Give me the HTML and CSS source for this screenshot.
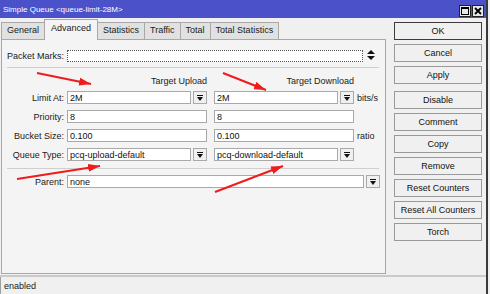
FILE: index.html
```html
<!DOCTYPE html>
<html lang="en">
<head>
    <meta charset="UTF-8">
    <title>Simple Queue &lt;queue-limit-28M&gt;</title>
    <link rel="stylesheet" href="styles.css">
</head>
<body>
    <div class="window">
        <!-- Title bar -->
        <div class="titlebar">
            <span class="title">Simple Queue &lt;queue-limit-28M&gt;</span>
            <div class="win-buttons">
                <span class="win-btn">
                    <svg width="8" height="8" viewBox="0 0 8 8"><rect x="0.5" y="0.5" width="7" height="7" fill="none" stroke="#000"/><rect x="0" y="0" width="8" height="2" fill="#000"/></svg>
                </span>
                <span class="win-btn">
                    <svg width="8" height="8" viewBox="0 0 8 8"><path d="M1 1 L7 7 M7 1 L1 7" stroke="#000" stroke-width="1.8"/></svg>
                </span>
            </div>
        </div>

        <div class="main">
            <div class="left">
                <!-- Tabs -->
                <div class="tabs">
                    <span class="tab">General</span>
                    <span class="tab active">Advanced</span>
                    <span class="tab">Statistics</span>
                    <span class="tab">Traffic</span>
                    <span class="tab">Total</span>
                    <span class="tab">Total Statistics</span>
                </div>

                <div class="panel">
                    <div class="row">
                        <label class="label">Packet Marks:</label>
                        <input class="input marks" type="text" value="">
                        <svg class="spinner" width="8" height="11" viewBox="0 0 8 11"><path d="M4 0 L8 4 L0 4 Z M0 6 L8 6 L4 10 Z" fill="#111"/></svg>
                    </div>

                    <div class="separator"></div>

                    <div class="row heading">
                        <span class="label"></span>
                        <span class="col-head">Target Upload</span>
                        <span class="col-head">Target Download</span>
                    </div>

                    <div class="row first">
                        <label class="label">Limit At:</label>
                        <div class="field">
                            <input class="input" type="text" value="2M">
                            <span class="drop"><svg width="6" height="6" viewBox="0 0 6 6"><rect x="0" y="0" width="6" height="1" fill="#111"/><path d="M0 2 L6 2 L3 6 Z" fill="#111"/></svg></span>
                        </div>
                        <div class="field">
                            <input class="input" type="text" value="2M">
                            <span class="drop"><svg width="6" height="6" viewBox="0 0 6 6"><rect x="0" y="0" width="6" height="1" fill="#111"/><path d="M0 2 L6 2 L3 6 Z" fill="#111"/></svg></span>
                        </div>
                        <span class="unit">bits/s</span>
                    </div>

                    <div class="row">
                        <label class="label">Priority:</label>
                        <div class="field"><input class="input" type="text" value="8"></div>
                        <div class="field"><input class="input" type="text" value="8"></div>
                    </div>

                    <div class="row">
                        <label class="label">Bucket Size:</label>
                        <div class="field"><input class="input" type="text" value="0.100"></div>
                        <div class="field"><input class="input" type="text" value="0.100"></div>
                        <span class="unit">ratio</span>
                    </div>

                    <div class="row">
                        <label class="label">Queue Type:</label>
                        <div class="field">
                            <input class="input" type="text" value="pcq-upload-default">
                            <span class="drop"><svg width="6" height="6" viewBox="0 0 6 6"><rect x="0" y="0" width="6" height="1" fill="#111"/><path d="M0 2 L6 2 L3 6 Z" fill="#111"/></svg></span>
                        </div>
                        <div class="field">
                            <input class="input" type="text" value="pcq-download-default">
                            <span class="drop"><svg width="6" height="6" viewBox="0 0 6 6"><rect x="0" y="0" width="6" height="1" fill="#111"/><path d="M0 2 L6 2 L3 6 Z" fill="#111"/></svg></span>
                        </div>
                    </div>

                    <div class="separator low"></div>

                    <div class="row">
                        <label class="label">Parent:</label>
                        <div class="field wide">
                            <input class="input" type="text" value="none">
                            <span class="drop"><svg width="6" height="6" viewBox="0 0 6 6"><rect x="0" y="0" width="6" height="1" fill="#111"/><path d="M0 2 L6 2 L3 6 Z" fill="#111"/></svg></span>
                        </div>
                    </div>
                </div>
            </div>

            <!-- Action buttons -->
            <div class="actions">
                <button class="btn default">OK</button>
                <button class="btn">Cancel</button>
                <button class="btn">Apply</button>
                <button class="btn spaced">Disable</button>
                <button class="btn">Comment</button>
                <button class="btn">Copy</button>
                <button class="btn">Remove</button>
                <button class="btn">Reset Counters</button>
                <button class="btn">Reset All Counters</button>
                <button class="btn">Torch</button>
            </div>
        </div>

        <!-- Status bar -->
        <div class="status">
            <span class="status-field">enabled</span>
        </div>

        <!-- Red annotation arrows -->
        <svg class="annotations" width="490" height="294" viewBox="0 0 490 294">
            <defs>
                <marker id="head" markerWidth="12" markerHeight="8" refX="12" refY="4" orient="auto" markerUnits="userSpaceOnUse">
                    <path d="M0 0 L12 4 L0 8 Z" fill="#ee1c1c"/>
                </marker>
            </defs>
            <line x1="37" y1="73" x2="91" y2="84" stroke="#ee1c1c" stroke-width="2" marker-end="url(#head)"/>
            <line x1="223" y1="73" x2="266" y2="90" stroke="#ee1c1c" stroke-width="2" marker-end="url(#head)"/>
            <line x1="17" y1="179" x2="100" y2="166" stroke="#ee1c1c" stroke-width="2" marker-end="url(#head)"/>
            <line x1="215" y1="192" x2="283" y2="166" stroke="#ee1c1c" stroke-width="2" marker-end="url(#head)"/>
        </svg>
    </div>
</body>
</html>
```

FILE: styles.css
```css
/* General Styles */
body {
    margin: 0;
    font-family: 'Liberation Sans', Arial, sans-serif;
    font-size: 9px;
    color: #1a1a1a;
    background-color: #f0f0f0;
}

.window {
    position: relative;
    width: 486px;
    height: 294px;
    border-right: 2px solid #3a3a3a;
    background-color: #f0f0f0;
    display: flex;
    flex-direction: column;
}

/* Title bar */
.titlebar {
    height: 18px;
    background-color: #4a51c9;
    color: white;
    font-size: 8px;
    display: flex;
    align-items: center;
    justify-content: space-between;
    padding: 0 2px 0 3px;
}

.win-buttons {
    display: flex;
    gap: 1px;
    margin-top: 4px;
}

.win-btn {
    width: 10px;
    height: 10px;
    border: 1px solid #222;
    background-color: #e8e8e8;
    display: flex;
    align-items: center;
    justify-content: center;
}

/* Main area */
.main {
    display: flex;
    height: 256px;
}

.left {
    width: 385px;
    margin-left: 1px;
    display: flex;
    flex-direction: column;
}

.tabs {
    height: 21px;
    display: flex;
    align-items: flex-end;
}

.tab {
    height: 16px;
    line-height: 15px;
    padding: 0 5px;
    border: 1px solid #a8a8a8;
    border-bottom: none;
    background-color: #e1e1e1;
    margin-right: -1px;
}

.tab.active {
    position: relative;
    height: 20px;
    line-height: 17px;
    padding: 0 6px;
    margin-bottom: -1px;
    background-color: #f4f4f4;
}

.panel {
    flex: 1;
    border: 1px solid #a8a8a8;
    background-color: #f4f4f4;
    padding-top: 9px;
}

/* Form rows */
.row {
    display: flex;
    align-items: center;
    height: 13px;
    margin-top: 6px;
}

.panel > .row:first-child {
    margin-top: 0;
}

.row.heading {
    height: 11px;
    margin-top: 7px;
    color: #222;
}

.row.first {
    margin-top: 5px;
}

.label {
    width: 62px;
    margin-right: 3px;
    text-align: right;
    white-space: nowrap;
}

.col-head {
    width: 140px;
    text-align: right;
}

.col-head + .col-head {
    margin-left: 7px;
}

.field {
    width: 140px;
    height: 13px;
    display: flex;
    gap: 2px;
}

.field + .field {
    margin-left: 7px;
}

.field.wide {
    width: 313px;
}

.input {
    flex: 1;
    min-width: 0;
    height: 13px;
    box-sizing: border-box;
    margin: 0;
    padding: 0 2px;
    border: 1px solid #a9a9a9;
    background-color: white;
    font-family: inherit;
    font-size: 9px;
    color: #111;
    outline: none;
}

.input.marks {
    flex: none;
    width: 296px;
    height: 12px;
    border: 1px dotted #555;
}

.spinner {
    margin-left: 4px;
}

.drop {
    width: 14px;
    height: 13px;
    box-sizing: border-box;
    border: 1px solid #a9a9a9;
    background-color: #f0f0f0;
    display: flex;
    align-items: center;
    justify-content: center;
}

.unit {
    margin-left: 3px;
}

.separator {
    height: 1px;
    margin: 5px 6px 0 5px;
    background-color: #cfcfcf;
}

.separator.low {
    margin-top: 7px;
}

/* Action buttons */
.actions {
    width: 88px;
    margin-left: 8px;
    padding-top: 4px;
    display: flex;
    flex-direction: column;
    gap: 4px;
}

.btn {
    height: 18px;
    margin: 0;
    padding: 0;
    border: 1px solid #9a9a9a;
    background-color: #f0f0f0;
    font-family: inherit;
    font-size: 9px;
    color: #111;
    text-align: center;
}

.btn.default {
    border-color: #3c3c3c;
}

.btn.spaced {
    margin-top: 3px;
}

/* Status bar */
.status {
    flex: 1;
    margin-top: 1px;
    border-top: 2px solid #cacaca;
    display: flex;
    align-items: center;
}

.status-field {
    padding-left: 3px;
    border-left: 1px solid #a0a0a0;
    height: 100%;
    display: flex;
    align-items: center;
}

.annotations {
    position: absolute;
    top: 0;
    left: 0;
    pointer-events: none;
}
```
